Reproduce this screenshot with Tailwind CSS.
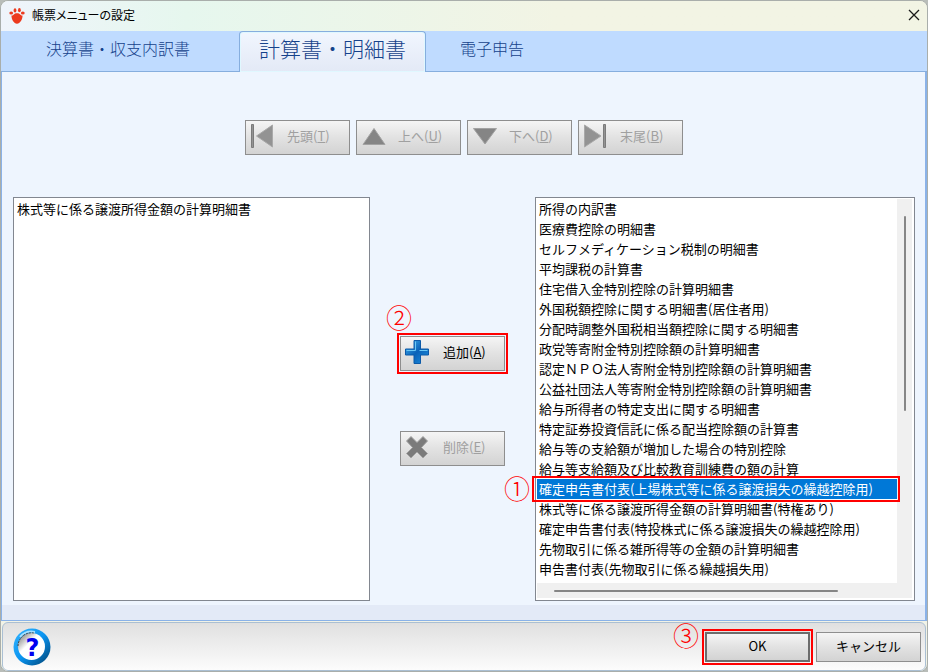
<!DOCTYPE html>
<html lang="ja">
<head>
    <meta charset="UTF-8" />
    <meta name="viewport" content="width=device-width, initial-scale=1" />
    <title>帳票メニューの設定</title>
    <script src="https://cdn.jsdelivr.net/npm/@tailwindcss/browser@4"></script>
</head>
<body class="bg-[#b9bdb9] font-['Noto_Sans_CJK_JP',sans-serif] text-[13px] leading-5 text-black">
    <div class="min-h-screen flex flex-col rounded-lg border border-[#a9aeab] bg-[#f2f3e6] overflow-hidden">
        <header class="h-[30px] shrink-0 flex items-center pl-2 pr-[7px] bg-linear-to-r from-[#eff4fb] via-[#e6f7ee] via-20% to-[#f2f4e4] to-60%">
            <svg class="size-4" viewBox="0 0 16 16" fill="#ec3a1e">
                <ellipse cx="2.2" cy="5" rx="1.9" ry="1.5" />
                <ellipse cx="6" cy="2.400" rx="1.4" ry="2.100" />
                <ellipse cx="10.400" cy="2.200" rx="1.400" ry="2.100" />
                <ellipse cx="13.800" cy="5" rx="1.900" ry="1.500" />
                <path d="M2.500 7.500C4.500 8 4.500 5.300 8 5.300S11.500 8 13.500 7.500C13.800 11 11 15.800 8 15.800S2.200 11 2.500 7.500Z" />
            </svg>
            <h1 class="ml-[7px] pb-0.5 text-xs [font-feature-settings:'palt']">帳票メニューの設定</h1>
            <button type="button" aria-label="閉じる" class="ml-auto pb-0.5">
                <svg class="size-3" viewBox="0 0 12 12" fill="none" stroke="#1a1a1a" stroke-width="1.3"><path d="M1 1L11 11M11 1L1 11" /></svg>
            </button>
        </header>

        <nav class="h-[41px] shrink-0 flex bg-[#bfdbff] border-b border-[#86aede] text-base font-light text-[#15428b]">
            <a href="#kessan" class="w-[238px] flex items-center justify-center pb-1.5 pr-1">決算書・収支内訳書</a>
            <a href="#keisan" aria-current="page" class="w-[187px] -mb-px flex items-center justify-center pb-1.5 rounded-t border border-b-0 border-[#86aede] bg-linear-to-b from-[#f1f6fe] to-[#e3e9f6] text-[21px] inset-shadow-[0_0_0_1px_#e0f8ff]">計算書・明細書</a>
            <a href="#denshi" class="w-[132px] flex items-center justify-center pb-1.5">電子申告</a>
        </nav>

        <main class="grow flex flex-col border-l border-r-2 border-b border-[#8ab2e8] bg-[#e3eaf7] pb-[15px]">
            <div class="grow flex flex-col bg-[#eef5fe] pl-[11px] pr-2.5 pt-12 pb-1">
                <div class="flex justify-center gap-1.5 text-[#a0a0a0]">
                    <button type="button" disabled class="w-[105px] h-[35px] flex items-center gap-3 pl-[5px] pb-1 border border-[#8e8e8e] bg-linear-to-b from-[#f5f5f5] via-[#e2e2e2] to-[#d3d3d3]">
                        <svg class="size-6 shrink-0" viewBox="0 0 24 24" fill="#939393" stroke="#7b7b7b"><path d="M.5.5h2v23h-2z" /><path d="M21.500 1v22L5.500 12z" stroke="#a9a9a9" /></svg>
                        <span>先頭(<u>T</u>)</span>
                    </button>
                    <button type="button" disabled class="w-[105px] h-[35px] flex items-center gap-3 pl-[5px] pb-1 border border-[#8e8e8e] bg-linear-to-b from-[#f5f5f5] via-[#e2e2e2] to-[#d3d3d3]">
                        <svg class="size-6 shrink-0" viewBox="0 0 24 24" fill="#858585" stroke="#a2a2a2"><path d="M12 4.500L23 20.500H1z" /></svg>
                        <span>上へ(<u>U</u>)</span>
                    </button>
                    <button type="button" disabled class="w-[105px] h-[35px] flex items-center gap-3 pl-[5px] pb-1 border border-[#8e8e8e] bg-linear-to-b from-[#f5f5f5] via-[#e2e2e2] to-[#d3d3d3]">
                        <svg class="size-6 shrink-0" viewBox="0 0 24 24" fill="#858585" stroke="#a2a2a2"><path d="M12 20L23.500 4.500H.5z" /></svg>
                        <span>下へ(<u>D</u>)</span>
                    </button>
                    <button type="button" disabled class="w-[105px] h-[35px] flex items-center gap-3 pl-[5px] pb-1 border border-[#8e8e8e] bg-linear-to-b from-[#f5f5f5] via-[#e2e2e2] to-[#d3d3d3]">
                        <svg class="size-6 shrink-0" viewBox="0 0 24 24" fill="#939393" stroke="#7b7b7b"><path d="M19.500.5h2v23h-2z" /><path d="M.5 1v22L17 12z" stroke="#a9a9a9" /></svg>
                        <span>末尾(<u>B</u>)</span>
                    </button>
                </div>

                <div class="grow mt-[42px] grid grid-cols-[357fr_165fr_380fr]">
                    <select size="19" aria-label="選択済みの帳票" class="block w-full h-full overflow-hidden appearance-none border border-[#828790] bg-white p-px pl-0">
                        <option class="h-5 min-h-5 px-[3px] pt-0 pb-0.5 leading-[18px]">株式等に係る譲渡所得金額の計算明細書</option>
                    </select>

                    <div class="flex flex-col items-center gap-[60px] pt-[139px]">
                        <div class="relative">
                            <span class="absolute -left-3.5 -top-[33px] text-[26px] leading-7 font-light text-[#f00]">②</span>
                            <button type="button" class="w-[105px] h-[35px] flex items-center gap-3.5 pl-1 pb-1 border border-[#8e8e8e] bg-linear-to-b from-[#f5f5f5] via-[#e2e2e2] to-[#d3d3d3] outline-2 outline-offset-1 outline-[#f00]">
                                <svg class="size-6 shrink-0" viewBox="0 0 24 24">
                                    <defs>
                                        <linearGradient id="plus" x1="0" y1="0" x2="1" y2="1"><stop offset="0" stop-color="#45b4f2" /><stop offset=".5" stop-color="#0a62b8" /><stop offset="1" stop-color="#1e90e0" /></linearGradient>
                                    </defs>
                                    <path d="M9 .5h6.500V9h8v6h-8v8.500H9V15H.5V9H9z" fill="url(#plus)" stroke="#0d5aa8" />
                                    <path d="M1.500 10.500H10.500V1.500M14.500 10.500h8" fill="none" stroke="#6cc8f5" />
                                </svg>
                                <span>追加(<u>A</u>)</span>
                            </button>
                        </div>
                        <button type="button" disabled class="w-[105px] h-[35px] flex items-center gap-3.5 pl-1 pb-1 border border-[#8e8e8e] bg-linear-to-b from-[#f5f5f5] via-[#e2e2e2] to-[#d3d3d3] text-[#a0a0a0]">
                            <svg class="size-6 shrink-0" viewBox="0 0 24 24"><path d="M6 1.500l6 6 6-6L22.500 6l-6 6.500 6 6L18 23l-6-6-6 6-4.500-4.500 6-6L1.500 6z" fill="#7b7b7b" stroke="#a3a3a3" /></svg>
                            <span>削除(<u>E</u>)</span>
                        </button>
                    </div>

                    <div class="relative grid grid-cols-[1fr_15px] grid-rows-[1fr_15px] border border-[#828790] bg-white p-px pb-0.5 pr-0.5">
                        <select size="19" aria-label="追加できる帳票" class="block w-full h-full overflow-hidden appearance-none border-0 bg-white p-0">
                            <option class="h-5 min-h-5 px-0.5 pt-0 pb-0.5 leading-[18px]">所得の内訳書</option>
                            <option class="h-5 min-h-5 px-0.5 pt-0 pb-0.5 leading-[18px]">医療費控除の明細書</option>
                            <option class="h-5 min-h-5 px-0.5 pt-0 pb-0.5 leading-[18px]">セルフメディケーション税制の明細書</option>
                            <option class="h-5 min-h-5 px-0.5 pt-0 pb-0.5 leading-[18px]">平均課税の計算書</option>
                            <option class="h-5 min-h-5 px-0.5 pt-0 pb-0.5 leading-[18px]">住宅借入金特別控除の計算明細書</option>
                            <option class="h-5 min-h-5 px-0.5 pt-0 pb-0.5 leading-[18px]">外国税額控除に関する明細書(居住者用)</option>
                            <option class="h-5 min-h-5 px-0.5 pt-0 pb-0.5 leading-[18px]">分配時調整外国税相当額控除に関する明細書</option>
                            <option class="h-5 min-h-5 px-0.5 pt-0 pb-0.5 leading-[18px]">政党等寄附金特別控除額の計算明細書</option>
                            <option class="h-5 min-h-5 px-0.5 pt-0 pb-0.5 leading-[18px]">認定ＮＰＯ法人寄附金特別控除額の計算明細書</option>
                            <option class="h-5 min-h-5 px-0.5 pt-0 pb-0.5 leading-[18px]">公益社団法人等寄附金特別控除額の計算明細書</option>
                            <option class="h-5 min-h-5 px-0.5 pt-0 pb-0.5 leading-[18px]">給与所得者の特定支出に関する明細書</option>
                            <option class="h-5 min-h-5 px-0.5 pt-0 pb-0.5 leading-[18px]">特定証券投資信託に係る配当控除額の計算書</option>
                            <option class="h-5 min-h-5 px-0.5 pt-0 pb-0.5 leading-[18px]">給与等の支給額が増加した場合の特別控除</option>
                            <option class="h-5 min-h-5 px-0.5 pt-0 pb-0.5 leading-[18px]">給与等支給額及び比較教育訓練費の額の計算</option>
                            <option selected class="h-5 min-h-5 px-0.5 pt-0 pb-0.5 leading-[18px] bg-linear-to-r from-[#0078d7] to-[#0078d7] [-webkit-text-fill-color:white]">確定申告書付表(上場株式等に係る譲渡損失の繰越控除用)</option>
                            <option class="h-5 min-h-5 px-0.5 pt-0 pb-0.5 leading-[18px]">株式等に係る譲渡所得金額の計算明細書(特権あり)</option>
                            <option class="h-5 min-h-5 px-0.5 pt-0 pb-0.5 leading-[18px]">確定申告書付表(特投株式に係る譲渡損失の繰越控除用)</option>
                            <option class="h-5 min-h-5 px-0.5 pt-0 pb-0.5 leading-[18px]">先物取引に係る雑所得等の金額の計算明細書</option>
                            <option class="h-5 min-h-5 px-0.5 pt-0 pb-0.5 leading-[18px]">申告書付表(先物取引に係る繰越損失用)</option>
                        </select>
                        <div class="flex justify-center bg-[#f0f0f0] pt-[17px]">
                            <div class="w-0.5 h-[195px] rounded bg-[#868686]"></div>
                        </div>
                        <div class="col-span-2 flex items-center bg-[#f0f0f0] pl-[17px]">
                            <div class="w-[284px] h-0.5 rounded bg-[#868686]"></div>
                        </div>
                        <!-- step 1 marker round the selected row -->
                        <div class="absolute -left-1 right-3.5 top-[278px] h-[26px] border-2 border-[#f00] pointer-events-none"></div>
                        <span class="absolute -left-8 top-[276px] text-[26px] leading-7 font-light text-[#f00]">①</span>
                    </div>
                </div>
            </div>
        </main>

        <footer class="h-[49px] shrink-0 mt-px mx-px flex items-center rounded-md border border-[#aabfd3] bg-linear-to-b from-[#e0e0e0] to-[#fcfcfc] pl-2.5 pr-1">
            <button type="button" aria-label="ヘルプ">
                <svg class="size-[38px]" viewBox="0 0 38 38">
                    <defs>
                        <linearGradient id="ring" x1="0" y1="0" x2="1" y2="1"><stop offset="0" stop-color="#35b5ff" /><stop offset=".5" stop-color="#0a94f0" /><stop offset="1" stop-color="#00406f" /></linearGradient>
                        <linearGradient id="face" x1="0" y1="0" x2="1" y2="1"><stop offset="0.1" stop-color="#8c8c8c" /><stop offset=".4" stop-color="#fff" /></linearGradient>
                    </defs>
                    <circle cx="19" cy="19" r="18.500" fill="url(#ring)" />
                    <path d="M7 9A15.500 15.500 0 0 1 22 4" fill="none" stroke="#a5e0ff" stroke-width="2" />
                    <circle cx="18.500" cy="18.500" r="13.500" fill="url(#face)" />
                    <path d="M5 18A13.500 13.500 0 0 1 21 5" fill="none" stroke="#444" stroke-dasharray="2 1" />
                    <text x="19.500" y="28" text-anchor="middle" font-family="DejaVu Sans" font-size="24" font-weight="bold" fill="#0000f0">?</text>
                </svg>
            </button>
            <div class="ml-auto flex gap-1.5">
                <div class="relative">
                    <span class="absolute -left-8 -top-[11px] text-[26px] leading-7 font-light text-[#f00]">③</span>
                    <button type="submit" class="block w-[105px] h-[30px] pb-0.5 border-2 border-[#6c6c6c] bg-linear-to-b from-[#f5f5f5] via-[#e2e2e2] to-[#d3d3d3] outline-2 outline-offset-1 outline-[#f00]">OK</button>
                </div>
                <button type="button" class="block w-[105px] h-[30px] pb-0.5 border border-[#8e8e8e] bg-linear-to-b from-[#f5f5f5] via-[#e2e2e2] to-[#d3d3d3]">キャンセル</button>
            </div>
        </footer>
    </div>
</body>
</html>
